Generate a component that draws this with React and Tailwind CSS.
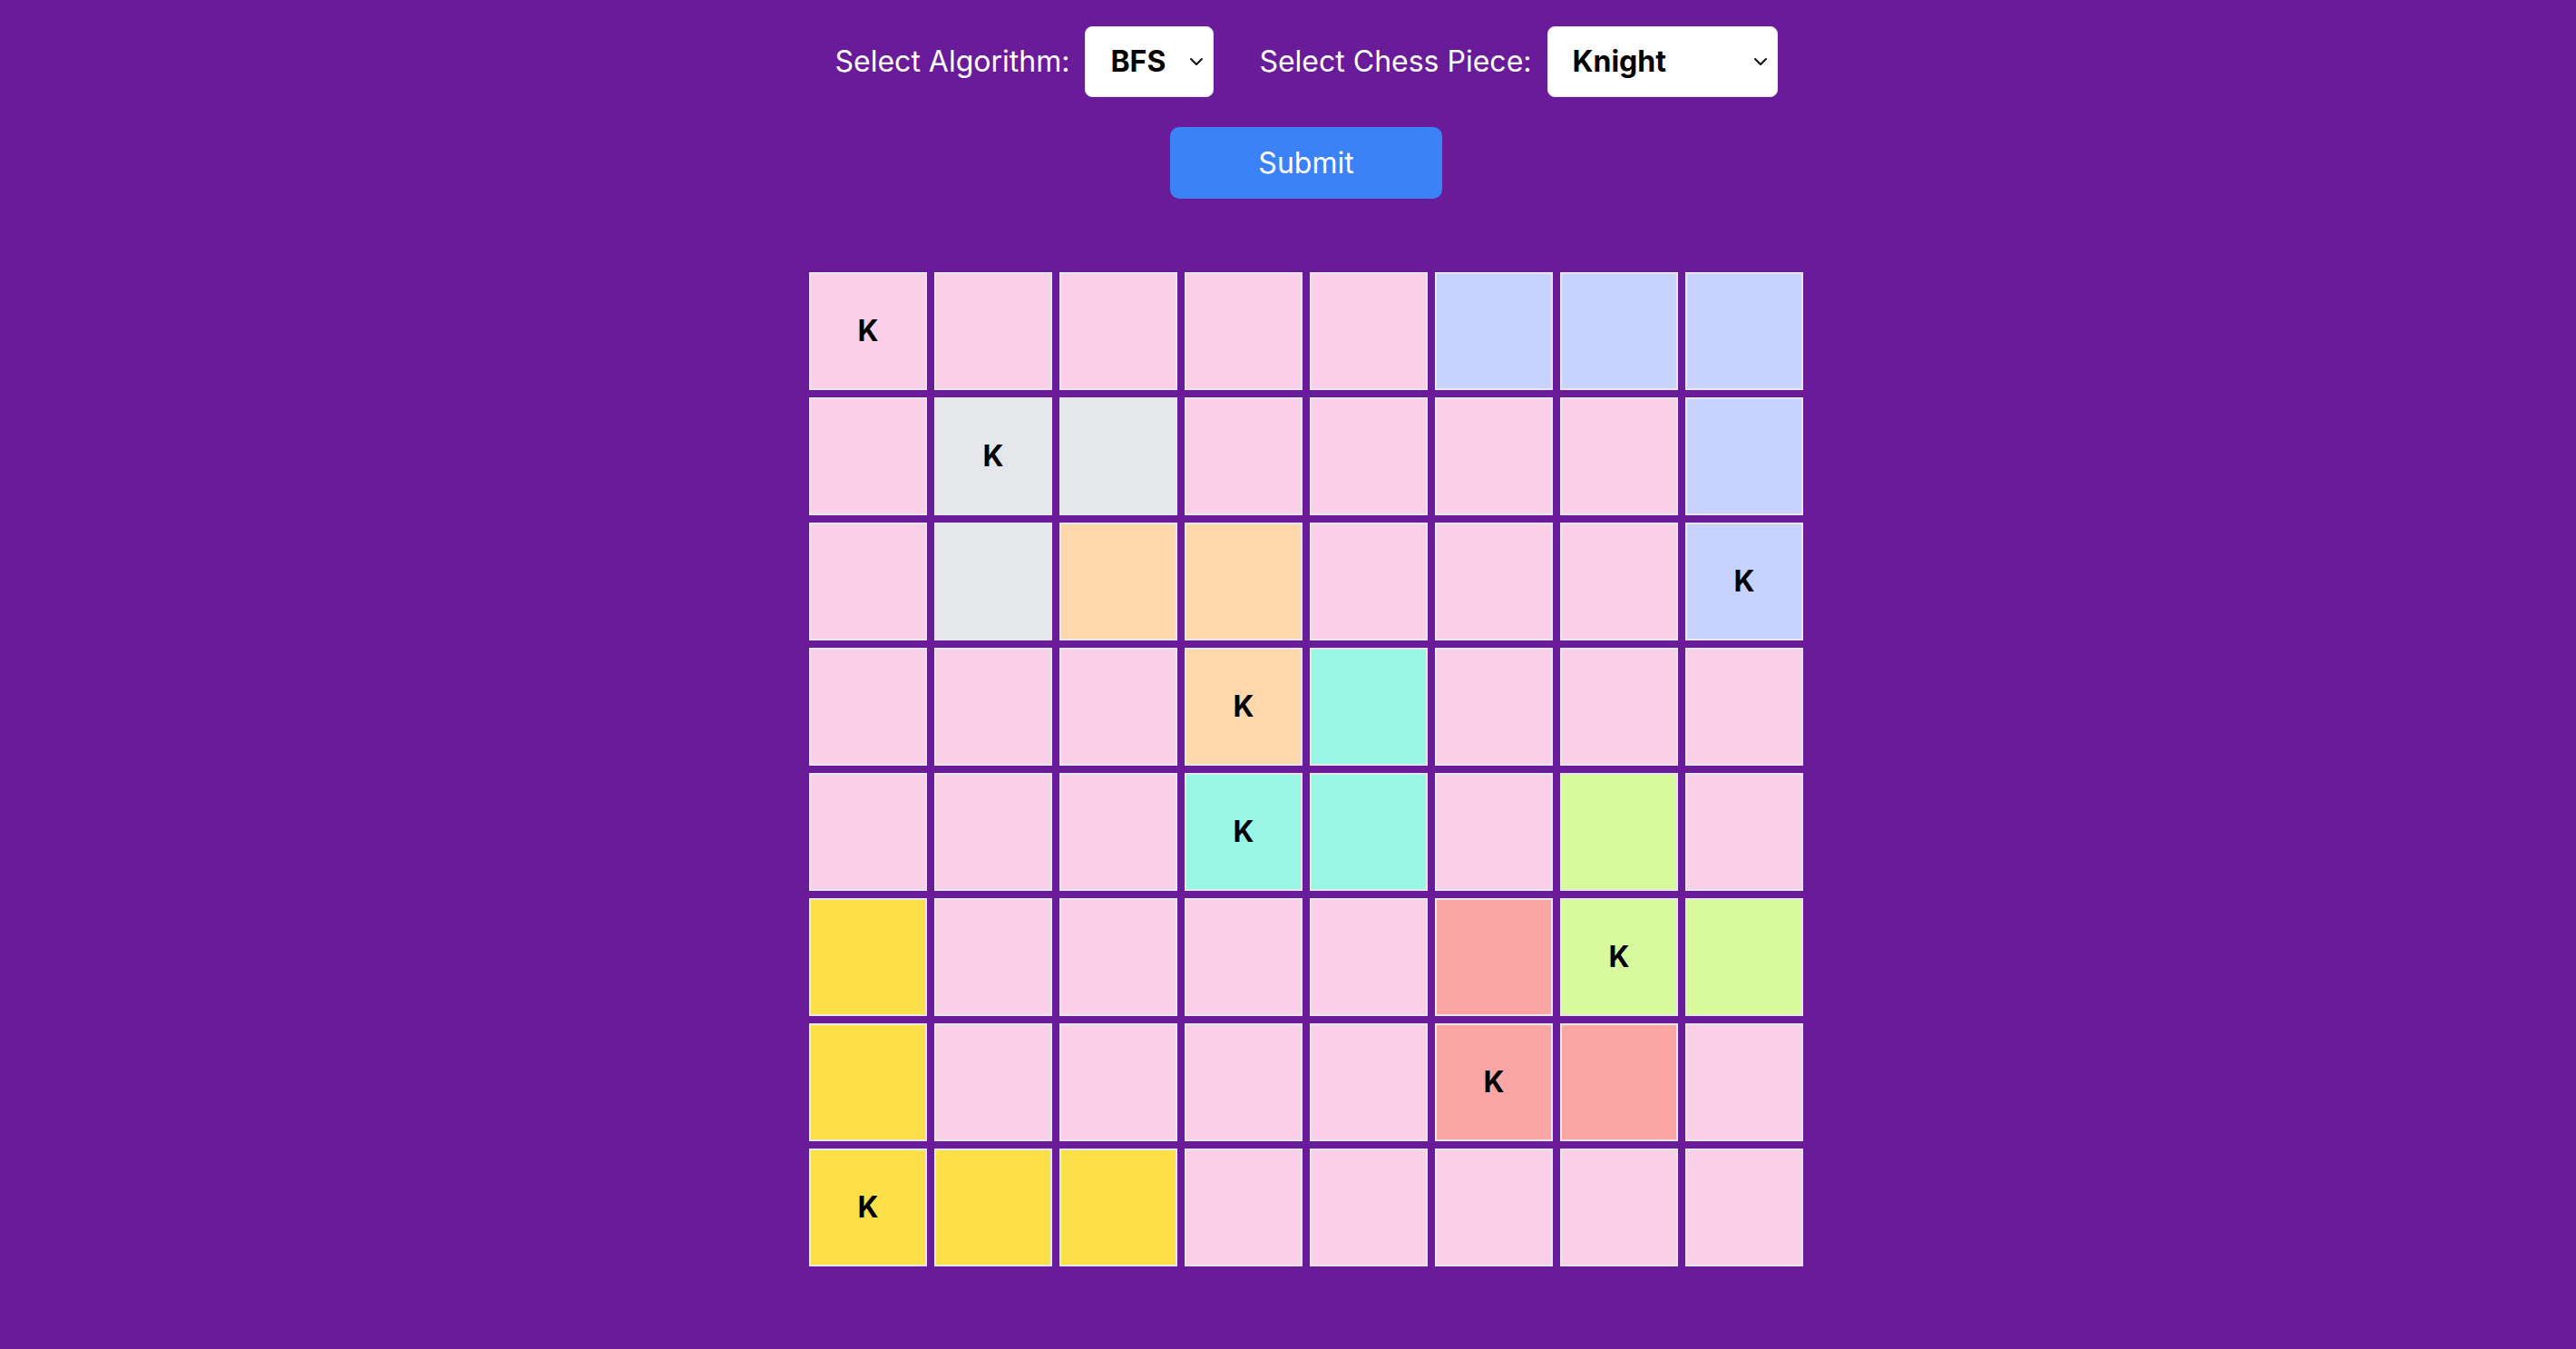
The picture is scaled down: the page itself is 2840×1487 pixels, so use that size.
import React from "react";

const C = {
  p: "bg-[#fbcfe8]",
  i: "bg-[#c7d2fe]",
  g: "bg-[#e5e7eb]",
  o: "bg-[#fed7aa]",
  t: "bg-[#99f6e4]",
  l: "bg-[#d9f99d]",
  r: "bg-[#fca5a5]",
  y: "bg-[#fde047]",
};

const rows = [
  ["pK", "p", "p", "p", "p", "i", "i", "i"],
  ["p", "gK", "g", "p", "p", "p", "p", "i"],
  ["p", "g", "o", "o", "p", "p", "p", "iK"],
  ["p", "p", "p", "oK", "t", "p", "p", "p"],
  ["p", "p", "p", "tK", "t", "p", "l", "p"],
  ["y", "p", "p", "p", "p", "r", "lK", "l"],
  ["y", "p", "p", "p", "p", "rK", "r", "p"],
  ["yK", "y", "y", "p", "p", "p", "p", "p"],
];

function Chevron() {
  return (
    <svg
      className="pointer-events-none absolute right-[11px] top-1/2 -translate-y-1/2"
      width="16"
      height="10"
      viewBox="0 0 16 10"
      fill="none"
    >
      <path d="M2 2 L8 8 L14 2" stroke="#111" strokeWidth="2" strokeLinecap="round" strokeLinejoin="round" />
    </svg>
  );
}

function Select({ value, options, width }) {
  return (
    <div className={`relative ${width}`}>
      <select
        defaultValue={value}
        className="appearance-none w-full h-[78px] bg-white rounded-[8px] border border-[#e5e7eb] pl-[27px] pr-[36px] text-[32px] font-bold text-black font-['Inter'] outline-none"
      >
        {options.map((o) => (
          <option key={o}>{o}</option>
        ))}
      </select>
      <Chevron />
    </div>
  );
}

export default function App() {
  return (
    <div className="min-h-screen w-full bg-[#6a1b9a] font-['Inter',sans-serif] pl-[40px] pt-[29px] pb-[40px] flex flex-col items-center">
      <div className="flex items-center">
        <label className="text-white text-[32px] leading-none">Select Algorithm:</label>
        <div className="ml-[17px]">
          <Select value="BFS" options={["BFS", "DFS"]} width="w-[142px]" />
        </div>
        <label className="ml-[50px] text-white text-[32px] leading-none">Select Chess Piece:</label>
        <div className="ml-[17px]">
          <Select value="Knight" options={["Knight", "Bishop", "Rook", "Queen", "King"]} width="w-[254px]" />
        </div>
      </div>
      <button className="mt-[33px] w-[300px] h-[79px] rounded-[10px] bg-[#3b82f6] text-white text-[32px] font-['Inter']">
        Submit
      </button>
      <div className="mt-[81px] grid grid-cols-8 gap-[8px]">
        {rows.flat().map((c, idx) => (
          <div
            key={idx}
            className={`w-[130px] h-[130px] border-2 border-[#e5e7eb] flex items-center justify-center text-[32px] font-bold text-black ${C[c[0]]}`}
          >
            {c.length > 1 ? "K" : ""}
          </div>
        ))}
      </div>
    </div>
  );
}
